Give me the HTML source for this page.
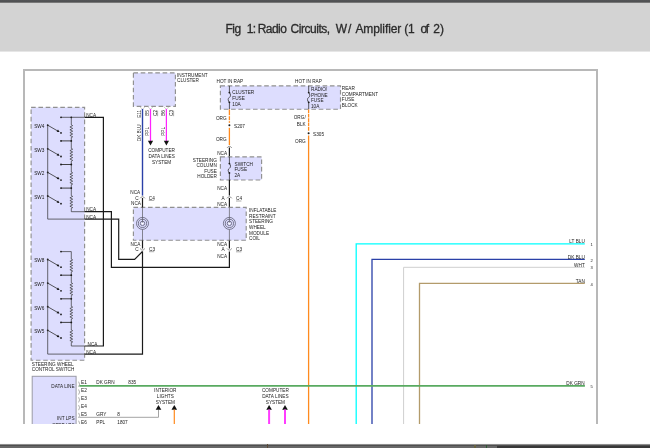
<!DOCTYPE html>
<html lang="en">
<head>
<meta charset="utf-8">
<title>Fig 1: Radio Circuits, W/ Amplifier (1 of 2)</title>
<style>
html,body{margin:0;padding:0;background:#fff;}
body{width:650px;height:448px;overflow:hidden;position:relative;font-family:"Liberation Sans",sans-serif;}
.topstrip{position:absolute;left:0;top:0;width:650px;height:3px;background:linear-gradient(#545557 0,#4f5052 2px,#787878 2px,#787878 3px);}
.titlebar{position:absolute;left:0;top:3px;width:650px;height:49px;background:linear-gradient(#d3d3d3 0,#d3d3d3 48px,#e6e6e6 48px,#e6e6e6 49px);}
.title{position:absolute;left:225.5px;top:20px;font-size:12px;line-height:18px;color:#2b2b2b;white-space:nowrap;will-change:transform;width:230px;height:18px;}
.title span{position:absolute;top:0;-webkit-text-stroke:0.3px #2b2b2b;}
.diagram{position:absolute;left:0;top:0;width:650px;height:424px;overflow:hidden;will-change:transform;}
.diagram svg{display:block;}
.diagram text{font-family:"Liberation Sans",sans-serif;fill:#202020;}
.botbar{position:absolute;left:0;top:444px;width:650px;height:4px;background:linear-gradient(#8e8e8e 0,#8e8e8e 1px,#4f4f4f 1px,#4f4f4f 2px,#676767 2px,#676767 4px);}
.botedge{position:absolute;left:0;top:443px;width:650px;height:1px;background:#fafafa;}
</style>
</head>
<body>
<div class="topstrip"></div>
<div class="titlebar"></div>
<div class="title"><span style="left:-0.6px;letter-spacing:-0.5px">Fig</span> <span style="left:20.8px;letter-spacing:-0.7px">1:</span> <span style="left:31.7px;letter-spacing:-0.55px">Radio</span> <span style="left:64.6px;letter-spacing:-0.48px">Circuits,</span> <span style="left:109.7px;letter-spacing:0.9px">W/</span> <span style="left:129.4px;letter-spacing:-0.1px">Amplifier</span> <span style="left:178.3px;letter-spacing:-0.2px">(1</span> <span style="left:194.4px;letter-spacing:-1.2px">of</span> <span style="left:207.2px;letter-spacing:0.2px">2)</span></div>
<div class="diagram">
<svg width="650" height="424" viewBox="0 0 650 424">
<rect x="24" y="70" width="573" height="380" fill="#fff" stroke="#b8b8b8" stroke-width="2"/>
<rect x="31.1" y="107.4" width="53.5" height="252.8" fill="#ddddfe" stroke="#909090" stroke-width="1.15" stroke-dasharray="4.6 2.7"/>
<path d="M71.3,117.3 L71.3,124.9 L72.7,125.6 L69.9,127.0 L72.7,128.4 L69.9,129.8 L72.7,131.2 L69.9,132.6 L72.7,134.0 L69.9,135.4 L72.7,136.8 L71.3,137.5 L71.3,140.9" stroke="#333" stroke-width="0.7" fill="none"/>
<path d="M71.3,140.9 L71.3,148.5 L72.7,149.2 L69.9,150.6 L72.7,152.0 L69.9,153.4 L72.7,154.8 L69.9,156.2 L72.7,157.6 L69.9,159.0 L72.7,160.4 L71.3,161.1 L71.3,164.5" stroke="#333" stroke-width="0.7" fill="none"/>
<path d="M71.3,164.5 L71.3,172.1 L72.7,172.8 L69.9,174.2 L72.7,175.6 L69.9,177.0 L72.7,178.4 L69.9,179.8 L72.7,181.2 L69.9,182.6 L72.7,184.0 L71.3,184.7 L71.3,188.1" stroke="#333" stroke-width="0.7" fill="none"/>
<path d="M71.3,188.1 L71.3,195.7 L72.7,196.4 L69.9,197.8 L72.7,199.2 L69.9,200.6 L72.7,202.0 L69.9,203.4 L72.7,204.8 L69.9,206.2 L72.7,207.6 L71.3,208.3 L71.3,211.7" stroke="#333" stroke-width="0.7" fill="none"/>
<path d="M61.0,117.3 L71.3,117.3" stroke="#2e2e2e" stroke-width="0.7" fill="none"/>
<circle cx="61.0" cy="117.3" r="0.9" fill="#1a1a1a"/>
<circle cx="71.3" cy="117.3" r="0.9" fill="#1a1a1a"/>
<path d="M61.0,140.9 L71.3,140.9" stroke="#2e2e2e" stroke-width="0.9" fill="none"/>
<circle cx="61.0" cy="140.9" r="0.9" fill="#1a1a1a"/>
<circle cx="71.3" cy="140.9" r="0.9" fill="#1a1a1a"/>
<path d="M61.0,164.5 L71.3,164.5" stroke="#2e2e2e" stroke-width="0.9" fill="none"/>
<circle cx="61.0" cy="164.5" r="0.9" fill="#1a1a1a"/>
<circle cx="71.3" cy="164.5" r="0.9" fill="#1a1a1a"/>
<path d="M61.0,188.1 L71.3,188.1" stroke="#2e2e2e" stroke-width="0.9" fill="none"/>
<circle cx="61.0" cy="188.1" r="0.9" fill="#1a1a1a"/>
<circle cx="71.3" cy="188.1" r="0.9" fill="#1a1a1a"/>
<circle cx="47.7" cy="125.2" r="0.9" fill="#1a1a1a"/>
<path d="M47.7,125.2 L58.6,131.5" stroke="#2e2e2e" stroke-width="0.8" fill="none"/>
<path d="M56.6,131.8 L59.6,132.1 L58.0,129.6Z" fill="#111"/>
<circle cx="61.0" cy="132.9" r="0.9" fill="#1a1a1a"/>
<text x="34.2" y="128.00" text-anchor="start" font-size="4.7">SW4</text>
<circle cx="47.7" cy="148.8" r="0.9" fill="#1a1a1a"/>
<path d="M47.7,148.8 L58.6,155.1" stroke="#2e2e2e" stroke-width="0.8" fill="none"/>
<path d="M56.6,155.4 L59.6,155.7 L58.0,153.2Z" fill="#111"/>
<circle cx="61.0" cy="156.5" r="0.9" fill="#1a1a1a"/>
<text x="34.2" y="152.00" text-anchor="start" font-size="4.7">SW3</text>
<circle cx="47.7" cy="172.4" r="0.9" fill="#1a1a1a"/>
<path d="M47.7,172.4 L58.6,178.7" stroke="#2e2e2e" stroke-width="0.8" fill="none"/>
<path d="M56.6,179.0 L59.6,179.3 L58.0,176.8Z" fill="#111"/>
<circle cx="61.0" cy="180.1" r="0.9" fill="#1a1a1a"/>
<text x="34.2" y="175.00" text-anchor="start" font-size="4.7">SW2</text>
<circle cx="47.7" cy="196.0" r="0.9" fill="#1a1a1a"/>
<path d="M47.7,196.0 L58.6,202.3" stroke="#2e2e2e" stroke-width="0.8" fill="none"/>
<path d="M56.6,202.6 L59.6,202.9 L58.0,200.4Z" fill="#111"/>
<circle cx="61.0" cy="203.7" r="0.9" fill="#1a1a1a"/>
<text x="34.2" y="199.00" text-anchor="start" font-size="4.7">SW1</text>
<path d="M71.3,251.6 L71.3,259.2 L72.7,259.9 L69.9,261.3 L72.7,262.7 L69.9,264.1 L72.7,265.5 L69.9,266.9 L72.7,268.3 L69.9,269.7 L72.7,271.1 L71.3,271.8 L71.3,275.2" stroke="#333" stroke-width="0.7" fill="none"/>
<path d="M71.3,275.2 L71.3,282.8 L72.7,283.5 L69.9,284.9 L72.7,286.3 L69.9,287.7 L72.7,289.1 L69.9,290.5 L72.7,291.9 L69.9,293.3 L72.7,294.7 L71.3,295.4 L71.3,298.8" stroke="#333" stroke-width="0.7" fill="none"/>
<path d="M71.3,298.8 L71.3,306.4 L72.7,307.1 L69.9,308.5 L72.7,309.9 L69.9,311.3 L72.7,312.7 L69.9,314.1 L72.7,315.5 L69.9,316.9 L72.7,318.3 L71.3,319.0 L71.3,322.4" stroke="#333" stroke-width="0.7" fill="none"/>
<path d="M71.3,322.4 L71.3,330.0 L72.7,330.7 L69.9,332.1 L72.7,333.5 L69.9,334.9 L72.7,336.3 L69.9,337.7 L72.7,339.1 L69.9,340.5 L72.7,341.9 L71.3,342.6 L71.3,346.0" stroke="#333" stroke-width="0.7" fill="none"/>
<path d="M61.0,251.6 L71.3,251.6" stroke="#2e2e2e" stroke-width="0.7" fill="none"/>
<circle cx="61.0" cy="251.6" r="0.9" fill="#1a1a1a"/>
<path d="M61.0,275.2 L71.3,275.2" stroke="#2e2e2e" stroke-width="0.9" fill="none"/>
<circle cx="61.0" cy="275.2" r="0.9" fill="#1a1a1a"/>
<circle cx="71.3" cy="275.2" r="0.9" fill="#1a1a1a"/>
<path d="M61.0,298.8 L71.3,298.8" stroke="#2e2e2e" stroke-width="0.9" fill="none"/>
<circle cx="61.0" cy="298.8" r="0.9" fill="#1a1a1a"/>
<circle cx="71.3" cy="298.8" r="0.9" fill="#1a1a1a"/>
<path d="M61.0,322.4 L71.3,322.4" stroke="#2e2e2e" stroke-width="0.9" fill="none"/>
<circle cx="61.0" cy="322.4" r="0.9" fill="#1a1a1a"/>
<circle cx="71.3" cy="322.4" r="0.9" fill="#1a1a1a"/>
<circle cx="47.7" cy="259.5" r="0.9" fill="#1a1a1a"/>
<path d="M47.7,259.5 L58.6,265.8" stroke="#2e2e2e" stroke-width="0.8" fill="none"/>
<path d="M56.6,266.1 L59.6,266.4 L58.0,263.9Z" fill="#111"/>
<circle cx="61.0" cy="267.2" r="0.9" fill="#1a1a1a"/>
<text x="34.2" y="262.00" text-anchor="start" font-size="4.7">SW8</text>
<circle cx="47.7" cy="283.1" r="0.9" fill="#1a1a1a"/>
<path d="M47.7,283.1 L58.6,289.4" stroke="#2e2e2e" stroke-width="0.8" fill="none"/>
<path d="M56.6,289.7 L59.6,290.0 L58.0,287.5Z" fill="#111"/>
<circle cx="61.0" cy="290.8" r="0.9" fill="#1a1a1a"/>
<text x="34.2" y="286.00" text-anchor="start" font-size="4.7">SW7</text>
<circle cx="47.7" cy="306.7" r="0.9" fill="#1a1a1a"/>
<path d="M47.7,306.7 L58.6,313.0" stroke="#2e2e2e" stroke-width="0.8" fill="none"/>
<path d="M56.6,313.3 L59.6,313.6 L58.0,311.1Z" fill="#111"/>
<circle cx="61.0" cy="314.4" r="0.9" fill="#1a1a1a"/>
<text x="34.2" y="310.00" text-anchor="start" font-size="4.7">SW6</text>
<circle cx="47.7" cy="330.3" r="0.9" fill="#1a1a1a"/>
<path d="M47.7,330.3 L58.6,336.6" stroke="#2e2e2e" stroke-width="0.8" fill="none"/>
<path d="M56.6,336.9 L59.6,337.2 L58.0,334.7Z" fill="#111"/>
<circle cx="61.0" cy="338.0" r="0.9" fill="#1a1a1a"/>
<text x="34.2" y="333.00" text-anchor="start" font-size="4.7">SW5</text>
<path d="M47.7,125.2 L47.7,219.1 L84.6,219.1" stroke="#2e2e2e" stroke-width="0.7" fill="none"/>
<path d="M47.7,259.5 L47.7,354.1 L84.6,354.1" stroke="#2e2e2e" stroke-width="0.7" fill="none"/>
<path d="M71.3,117.3 L84.6,117.3" stroke="#2e2e2e" stroke-width="0.7" fill="none"/>
<path d="M71.3,211.7 L84.6,211.7" stroke="#2e2e2e" stroke-width="0.7" fill="none"/>
<path d="M71.3,346.0 L84.6,346.0" stroke="#2e2e2e" stroke-width="0.7" fill="none"/>
<path d="M84.6,117.3 L103.4,117.3 L103.4,346.0 L84.6,346.0" stroke="#1a1a1a" stroke-width="1.2" fill="none"/>
<path d="M84.6,211.7 L111.4,211.7 L111.4,267.4 L229.4,267.4 L229.4,251.4" stroke="#1a1a1a" stroke-width="1.2" fill="none"/>
<path d="M84.6,219.1 L118.7,219.1 L118.7,259.4 L134.6,259.4 L142.5,251.5" stroke="#1a1a1a" stroke-width="1.2" fill="none"/>
<path d="M84.6,354.1 L142.5,354.1 L142.5,251.4" stroke="#1a1a1a" stroke-width="1.2" fill="none"/>
<text x="86.2" y="117.00" text-anchor="start" font-size="4.7">NCA</text>
<text x="86.2" y="211.00" text-anchor="start" font-size="4.7">NCA</text>
<text x="86.2" y="219.00" text-anchor="start" font-size="4.7">NCA</text>
<text x="87.6" y="346.00" text-anchor="start" font-size="4.7">NCA</text>
<text x="86.2" y="354.00" text-anchor="start" font-size="4.7">NCA</text>
<text x="31.8" y="366.00" text-anchor="start" font-size="4.7">STEERING WHEEL</text>
<text x="31.8" y="371.00" text-anchor="start" font-size="4.7">CONTROL SWITCH</text>
<rect x="133.4" y="72.9" width="42.0" height="33.4" fill="#ddddfe" stroke="#909090" stroke-width="1.15" stroke-dasharray="4.6 2.7"/>
<text x="177.0" y="77.00" text-anchor="start" font-size="4.7">INSTRUMENT</text>
<text x="177.0" y="82.00" text-anchor="start" font-size="4.7">CLUSTER</text>
<path d="M140.1,106.9 L142.5,109.3 L144.9,106.9" stroke="#b5b5b5" stroke-width="0.7" fill="none"/>
<path d="M148.1,106.9 L150.5,109.3 L152.9,106.9" stroke="#b5b5b5" stroke-width="0.7" fill="none"/>
<path d="M164.0,106.9 L166.4,109.3 L168.8,106.9" stroke="#b5b5b5" stroke-width="0.7" fill="none"/>
<path d="M142.5,109.0 L142.5,195.6" stroke="#2a40a8" stroke-width="1.4" fill="none"/>
<path d="M150.5,109.0 L150.5,141.5" stroke="#ff22ff" stroke-width="1.25" fill="none"/>
<path d="M166.4,109.0 L166.4,141.5" stroke="#ff22ff" stroke-width="1.25" fill="none"/>
<path d="M147.9,140.7 L153.1,140.7 L150.5,145.6Z" fill="#111"/>
<path d="M163.8,140.7 L169.0,140.7 L166.4,145.6Z" fill="#111"/>
<text transform="translate(140.68,117.8) rotate(-90)" font-size="4.7">E11</text>
<text transform="translate(148.78,116.0) rotate(-90)" font-size="4.7">B5</text>
<text transform="translate(156.98,116.0) rotate(-90)" font-size="4.7">C2</text>
<text transform="translate(164.88,116.0) rotate(-90)" font-size="4.7">B6</text>
<text transform="translate(172.98,116.0) rotate(-90)" font-size="4.7">C3</text>
<path d="M157.6,110.6 L157.6,116.2 M173.6,110.6 L173.6,116.2" stroke="#555" stroke-width="0.5"/>
<text transform="translate(140.68,141.2) rotate(-90)" font-size="4.7">DK BLU</text>
<text transform="translate(148.78,135.8) rotate(-90)" font-size="4.7">PPL</text>
<text transform="translate(164.88,135.8) rotate(-90)" font-size="4.7">PPL</text>
<text x="161.6" y="152.00" text-anchor="middle" font-size="4.7">COMPUTER</text>
<text x="161.6" y="158.00" text-anchor="middle" font-size="4.7">DATA LINES</text>
<text x="161.6" y="164.00" text-anchor="middle" font-size="4.7">SYSTEM</text>
<rect x="220.4" y="85.9" width="120.1" height="23.3" fill="#ddddfe" stroke="#909090" stroke-width="1.15" stroke-dasharray="4.6 2.7"/>
<text x="216.5" y="83.00" text-anchor="start" font-size="4.7">HOT IN RAP</text>
<text x="295.1" y="83.00" text-anchor="start" font-size="4.7">HOT IN RAP</text>
<path d="M229.4,85.9 L229.4,92.6" stroke="#2e2e2e" stroke-width="0.8" fill="none"/>
<path d="M229.4,102.3 L229.4,109.2" stroke="#2e2e2e" stroke-width="0.8" fill="none"/>
<path d="M229.4,92.6 C231.0,94.1 230.8,96.6 229.4,97.4 C227.8,98.2 227.8,100.8 229.4,102.3" stroke="#2e2e2e" stroke-width="0.8" fill="none"/>
<circle cx="229.4" cy="92.6" r="0.9" fill="#1a1a1a"/>
<circle cx="229.4" cy="102.3" r="0.9" fill="#1a1a1a"/>
<path d="M308.7,85.9 L308.7,92.6" stroke="#2e2e2e" stroke-width="0.8" fill="none"/>
<path d="M308.7,102.3 L308.7,109.2" stroke="#2e2e2e" stroke-width="0.8" fill="none"/>
<path d="M308.7,92.6 C310.3,94.1 310.1,96.6 308.7,97.4 C307.1,98.2 307.1,100.8 308.7,102.3" stroke="#2e2e2e" stroke-width="0.8" fill="none"/>
<circle cx="308.7" cy="92.6" r="0.9" fill="#1a1a1a"/>
<circle cx="308.7" cy="102.3" r="0.9" fill="#1a1a1a"/>
<text x="232.3" y="94.00" text-anchor="start" font-size="4.7">CLUSTER</text>
<text x="232.3" y="100.00" text-anchor="start" font-size="4.7">FUSE</text>
<text x="232.3" y="106.00" text-anchor="start" font-size="4.7">10A</text>
<text x="311.0" y="91.00" text-anchor="start" font-size="4.7">RADIO/</text>
<text x="311.0" y="97.00" text-anchor="start" font-size="4.7">PHONE</text>
<text x="311.0" y="102.00" text-anchor="start" font-size="4.7">FUSE</text>
<text x="311.0" y="108.00" text-anchor="start" font-size="4.7">10A</text>
<text x="341.8" y="90.00" text-anchor="start" font-size="4.7">REAR</text>
<text x="341.8" y="96.00" text-anchor="start" font-size="4.7">COMPARTMENT</text>
<text x="341.8" y="101.00" text-anchor="start" font-size="4.7">FUSE</text>
<text x="341.8" y="107.00" text-anchor="start" font-size="4.7">BLOCK</text>
<path d="M229.4,109.4 L229.4,145.0" stroke="#ff8a1e" stroke-width="1.3" fill="none"/>
<rect x="228" y="115.2" width="3" height="1" fill="#fff"/><rect x="228" y="120.2" width="3" height="1" fill="#fff"/><rect x="228" y="122.8" width="3" height="5" fill="#fff"/>
<circle cx="229.4" cy="125.3" r="1.0" fill="#1a1a1a"/>
<text x="226.6" y="120.00" text-anchor="end" font-size="4.7">ORG</text>
<text x="234.0" y="128.00" text-anchor="start" font-size="4.7">S207</text>
<text x="226.6" y="141.00" text-anchor="end" font-size="4.7">ORG</text>
<path d="M227.0,147.9 Q229.4,144.7 231.8,147.9" stroke="#6e6e6e" stroke-width="0.8" fill="none"/>
<path d="M229.4,147.5 L229.4,156.9" stroke="#1a1a1a" stroke-width="1.2" fill="none"/>
<text x="227.1" y="155.00" text-anchor="end" font-size="4.7">NCA</text>
<rect x="220.4" y="156.9" width="41.2" height="23.1" fill="#ddddfe" stroke="#909090" stroke-width="1.15" stroke-dasharray="4.6 2.7"/>
<path d="M229.4,156.9 L229.4,163.6" stroke="#2e2e2e" stroke-width="0.8" fill="none"/>
<path d="M229.4,173.0 L229.4,180.0" stroke="#2e2e2e" stroke-width="0.8" fill="none"/>
<path d="M229.4,163.6 C231.0,165.1 230.8,167.5 229.4,168.3 C227.8,169.1 227.8,171.5 229.4,173.0" stroke="#2e2e2e" stroke-width="0.8" fill="none"/>
<circle cx="229.4" cy="163.6" r="0.9" fill="#1a1a1a"/>
<circle cx="229.4" cy="173.0" r="0.9" fill="#1a1a1a"/>
<text x="216.8" y="162.00" text-anchor="end" font-size="4.7">STEERING</text>
<text x="216.8" y="167.00" text-anchor="end" font-size="4.7">COLUMN</text>
<text x="216.8" y="173.00" text-anchor="end" font-size="4.7">FUSE</text>
<text x="216.8" y="178.00" text-anchor="end" font-size="4.7">HOLDER</text>
<text x="234.5" y="166.00" text-anchor="start" font-size="4.7">SWITCH</text>
<text x="234.5" y="171.00" text-anchor="start" font-size="4.7">FUSE</text>
<text x="234.5" y="177.00" text-anchor="start" font-size="4.7">2A</text>
<path d="M229.4,180.0 L229.4,195.6" stroke="#1a1a1a" stroke-width="1.2" fill="none"/>
<text x="227.1" y="190.00" text-anchor="end" font-size="4.7">NCA</text>
<path d="M227.0,198.3 Q229.4,195.1 231.8,198.3" stroke="#6e6e6e" stroke-width="0.8" fill="none"/>
<path d="M229.4,198.0 L229.4,207.4" stroke="#1a1a1a" stroke-width="1.2" fill="none"/>
<text x="224.6" y="200.00" text-anchor="end" font-size="4.7">A</text>
<text x="236.0" y="200.00" text-anchor="start" font-size="4.7">C4</text>
<path d="M236.0,201.0 L241.4,201.0" stroke="#555" stroke-width="0.5"/>
<text x="227.1" y="206.00" text-anchor="end" font-size="4.7">NCA</text>
<path d="M308.6,109.4 L308.6,131.0" stroke="#ff8a1e" stroke-width="1.3" fill="none" stroke-dasharray="3.7 0.7"/>
<path d="M308.6,135.6 L308.6,424.0" stroke="#ff8a1e" stroke-width="1.3" fill="none"/>
<circle cx="308.6" cy="133.3" r="1.0" fill="#1a1a1a"/>
<text x="305.7" y="119.00" text-anchor="end" font-size="4.7">ORG/</text>
<text x="305.7" y="126.00" text-anchor="end" font-size="4.7">BLK</text>
<text x="313.1" y="136.00" text-anchor="start" font-size="4.7">S305</text>
<text x="305.7" y="143.00" text-anchor="end" font-size="4.7">ORG</text>
<rect x="133.4" y="207.4" width="112.8" height="32.9" fill="#ddddfe" stroke="#909090" stroke-width="1.15" stroke-dasharray="4.6 2.7"/>
<path d="M142.5,207.4 L142.5,223.4" stroke="#444" stroke-width="0.6" fill="none"/>
<circle cx="142.5" cy="223.4" r="2.2" fill="none" stroke="#55556a" stroke-width="0.75"/>
<circle cx="142.5" cy="223.4" r="4.1" fill="none" stroke="#55556a" stroke-width="0.75"/>
<circle cx="142.5" cy="223.4" r="6.0" fill="none" stroke="#55556a" stroke-width="0.75"/>
<circle cx="142.5" cy="223.4" r="1.0" fill="#fff"/>
<path d="M142.5,229.5 L142.5,240.4" stroke="#444" stroke-width="0.6" fill="none"/>
<path d="M142.5,240.4 L142.5,248.5" stroke="#1a1a1a" stroke-width="1.2" fill="none"/>
<path d="M229.4,207.4 L229.4,223.4" stroke="#444" stroke-width="0.6" fill="none"/>
<circle cx="229.4" cy="223.4" r="2.2" fill="none" stroke="#55556a" stroke-width="0.75"/>
<circle cx="229.4" cy="223.4" r="4.1" fill="none" stroke="#55556a" stroke-width="0.75"/>
<circle cx="229.4" cy="223.4" r="6.0" fill="none" stroke="#55556a" stroke-width="0.75"/>
<circle cx="229.4" cy="223.4" r="1.0" fill="#fff"/>
<path d="M229.4,229.5 L229.4,240.4" stroke="#444" stroke-width="0.6" fill="none"/>
<path d="M229.4,240.4 L229.4,248.5" stroke="#1a1a1a" stroke-width="1.2" fill="none"/>
<text x="249.0" y="212.00" text-anchor="start" font-size="4.7">INFLATABLE</text>
<text x="249.0" y="218.00" text-anchor="start" font-size="4.7">RESTRAINT</text>
<text x="249.0" y="223.00" text-anchor="start" font-size="4.7">STEERING</text>
<text x="249.0" y="229.00" text-anchor="start" font-size="4.7">WHEEL</text>
<text x="249.0" y="235.00" text-anchor="start" font-size="4.7">MODULE</text>
<text x="249.0" y="240.00" text-anchor="start" font-size="4.7">COIL</text>
<text x="140.2" y="194.00" text-anchor="end" font-size="4.7">NCA</text>
<text x="138.6" y="200.00" text-anchor="end" font-size="4.7">C</text>
<text x="141.0" y="205.00" text-anchor="end" font-size="4.7">NCA</text>
<path d="M140.1,198.3 Q142.5,195.1 144.9,198.3" stroke="#6e6e6e" stroke-width="0.8" fill="none"/>
<path d="M142.5,198.0 L142.5,207.4" stroke="#1a1a1a" stroke-width="1.2" fill="none"/>
<text x="148.8" y="200.00" text-anchor="start" font-size="4.7">C4</text>
<path d="M148.8,200.4 L154.2,200.4" stroke="#555" stroke-width="0.5"/>
<text x="140.4" y="246.00" text-anchor="end" font-size="4.7">NCA</text>
<text x="138.6" y="251.00" text-anchor="end" font-size="4.7">C</text>
<path d="M140.1,248.5 Q142.5,251.7 144.9,248.5" stroke="#6e6e6e" stroke-width="0.8" fill="none"/>
<text x="149.0" y="251.00" text-anchor="start" font-size="4.7">C3</text>
<path d="M149.0,251.7 L154.2,251.7" stroke="#555" stroke-width="0.5"/>
<text x="227.1" y="246.00" text-anchor="end" font-size="4.7">NCA</text>
<text x="224.6" y="251.00" text-anchor="end" font-size="4.7">A</text>
<path d="M227.0,248.5 Q229.4,251.7 231.8,248.5" stroke="#6e6e6e" stroke-width="0.8" fill="none"/>
<text x="236.0" y="251.00" text-anchor="start" font-size="4.7">C3</text>
<path d="M236.0,251.8 L241.4,251.8" stroke="#555" stroke-width="0.5"/>
<text x="227.1" y="258.00" text-anchor="end" font-size="4.7">NCA</text>
<path d="M584.8,243.9 L356.2,243.9 L356.2,424.0" stroke="#00ffff" stroke-width="1.3" fill="none"/>
<path d="M584.8,259.4 L372.0,259.4 L372.0,424.0" stroke="#2a40a8" stroke-width="1.3" fill="none"/>
<path d="M584.8,267.3 L403.6,267.3 L403.6,424.0" stroke="#cfcfcf" stroke-width="1.0" fill="none"/>
<path d="M584.8,283.3 L419.5,283.3 L419.5,424.0" stroke="#b39b6b" stroke-width="1.3" fill="none"/>
<text x="584.8" y="243.00" text-anchor="end" font-size="4.7">LT BLU</text>
<text x="584.8" y="259.00" text-anchor="end" font-size="4.7">DK BLU</text>
<text x="584.8" y="267.00" text-anchor="end" font-size="4.7">WHT</text>
<text x="584.8" y="283.00" text-anchor="end" font-size="4.7">TAN</text>
<text x="584.6" y="385.00" text-anchor="end" font-size="4.7">DK GRN</text>
<text x="591.7" y="246.00" text-anchor="middle" font-size="4.1">1</text>
<text x="591.7" y="262.00" text-anchor="middle" font-size="4.1">2</text>
<text x="591.7" y="269.00" text-anchor="middle" font-size="4.1">3</text>
<text x="591.7" y="286.00" text-anchor="middle" font-size="4.1">4</text>
<text x="591.7" y="388.00" text-anchor="middle" font-size="4.1">5</text>
<rect x="32.2" y="376.3" width="43.9" height="60" fill="#ddddfe" stroke="#9a9aa6" stroke-width="1"/>
<path d="M79.4,385.9 L584.9,385.9" stroke="#58aa60" stroke-width="1.7" fill="none"/>
<text x="74.6" y="388.00" text-anchor="end" font-size="4.7">DATA LINE</text>
<text x="74.6" y="420.00" text-anchor="end" font-size="4.7">INT LPS</text>
<text x="74.6" y="427.00" text-anchor="end" font-size="4.7">STEP LPS</text>
<text x="81.0" y="384.00" text-anchor="start" font-size="4.7">E1</text>
<path d="M78.6,381.7 Q80.6,384.3 78.6,386.8" stroke="#777" stroke-width="0.6" fill="none"/>
<text x="81.0" y="392.00" text-anchor="start" font-size="4.7">E2</text>
<path d="M78.6,389.5 Q80.6,392.1 78.6,394.6" stroke="#777" stroke-width="0.6" fill="none"/>
<text x="81.0" y="400.00" text-anchor="start" font-size="4.7">E3</text>
<path d="M78.6,397.3 Q80.6,399.9 78.6,402.4" stroke="#777" stroke-width="0.6" fill="none"/>
<text x="81.0" y="408.00" text-anchor="start" font-size="4.7">E4</text>
<path d="M78.6,405.1 Q80.6,407.7 78.6,410.2" stroke="#777" stroke-width="0.6" fill="none"/>
<text x="81.0" y="416.00" text-anchor="start" font-size="4.7">E5</text>
<path d="M78.6,412.9 Q80.6,415.5 78.6,418.0" stroke="#777" stroke-width="0.6" fill="none"/>
<text x="81.0" y="424.00" text-anchor="start" font-size="4.7">E6</text>
<path d="M78.6,420.7 Q80.6,423.3 78.6,425.8" stroke="#777" stroke-width="0.6" fill="none"/>
<text x="96.3" y="384.00" text-anchor="start" font-size="4.7">DK GRN</text>
<text x="128.3" y="384.00" text-anchor="start" font-size="4.7">835</text>
<text x="96.3" y="416.00" text-anchor="start" font-size="4.7">GRY</text>
<text x="117.3" y="416.00" text-anchor="start" font-size="4.7">8</text>
<text x="96.3" y="424.00" text-anchor="start" font-size="4.7">PPL</text>
<text x="117.3" y="424.00" text-anchor="start" font-size="4.7">1807</text>
<path d="M79.4,417.3 L158.5,417.3 L158.5,409.5" stroke="#9a9a9a" stroke-width="0.9" fill="none"/>
<path d="M155.7,409.7 L161.3,409.7 L158.5,404.9Z" fill="#111"/>
<path d="M171.5,409.7 L177.1,409.7 L174.3,404.9Z" fill="#111"/>
<path d="M174.3,409.5 L174.3,424.0" stroke="#ff8a1e" stroke-width="1.2" fill="none"/>
<text x="165.3" y="392.00" text-anchor="middle" font-size="4.7">INTERIOR</text>
<text x="165.3" y="398.00" text-anchor="middle" font-size="4.7">LIGHTS</text>
<text x="165.3" y="404.00" text-anchor="middle" font-size="4.7">SYSTEM</text>
<text x="275.4" y="392.00" text-anchor="middle" font-size="4.7">COMPUTER</text>
<text x="275.4" y="398.00" text-anchor="middle" font-size="4.7">DATA LINES</text>
<text x="275.4" y="404.00" text-anchor="middle" font-size="4.7">SYSTEM</text>
<path d="M266.3,409.8 L271.9,409.8 L269.1,405.0Z" fill="#111"/>
<path d="M282.2,409.8 L287.8,409.8 L285.0,405.0Z" fill="#111"/>
<path d="M269.1,409.5 L269.1,424.0" stroke="#ff3cff" stroke-width="2.0" fill="none"/>
<path d="M285.0,409.5 L285.0,424.0" stroke="#ff3cff" stroke-width="2.0" fill="none"/>
</svg>
</div>
<div class="botedge"></div>
<div class="botbar"></div>
<div style="position:absolute;left:497px;top:446px;width:153px;height:2px;background:#383838"></div>
<div style="position:absolute;left:267px;top:444px;width:1px;height:4px;background:#5c4a36"></div>
<div style="position:absolute;left:474px;top:445px;width:2px;height:3px;background:#6a6440"></div>
<div style="position:absolute;left:486px;top:445px;width:1px;height:3px;background:#2c5a34"></div>
</body>
</html>
